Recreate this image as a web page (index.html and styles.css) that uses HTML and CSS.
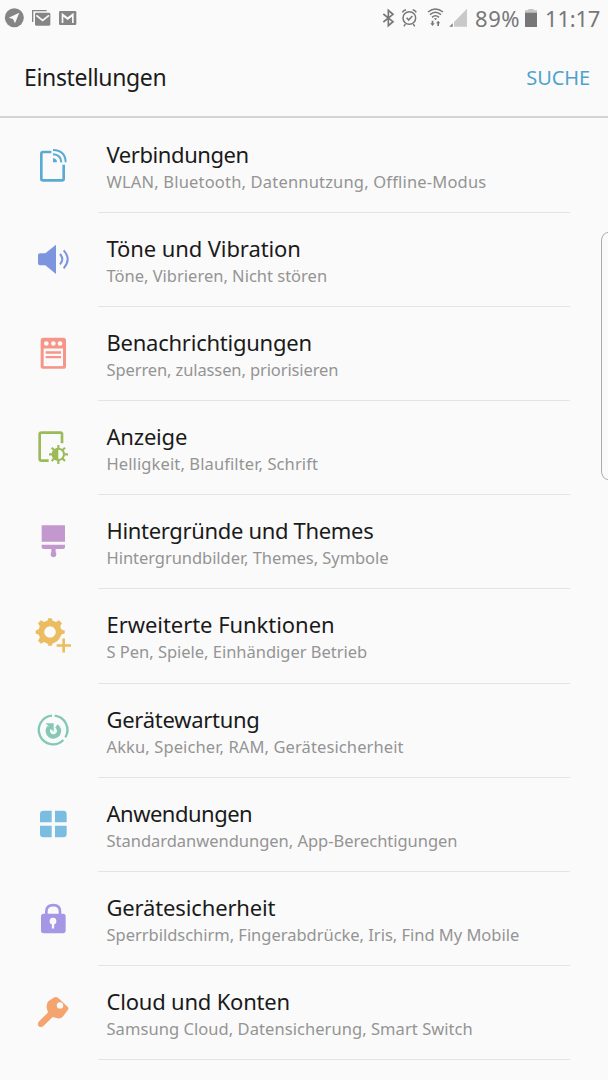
FILE: index.html
```html
<!DOCTYPE html>
<html lang="de">
<head>
<meta charset="utf-8">
<title>Einstellungen</title>
<link rel="stylesheet" href="styles.css">
</head>
<body>
<div class="screen">
<div class="statusbar">
  <svg class="status-left" viewBox="0 0 240 108">
    <circle cx="43" cy="53" r="28.5" fill="#858585"/><path d="M58 38L26 53L39 57L45 70Z" fill="#fafafa"/>
    <path d="M98 66V32H140" fill="none" stroke="#858585" stroke-width="4"/>
    <rect x="105" y="38" width="46" height="39" rx="4" fill="#858585"/><path d="M109 46L128 61L147 46" fill="none" stroke="#fafafa" stroke-width="5"/>
    <rect x="177" y="33" width="52" height="42" rx="4" fill="#858585"/><path d="M185 38L203 52L221 38V69H185Z" fill="#fafafa"/><path d="M190 69V50L203 60L216 50V69Z" fill="#858585"/>
  </svg>
  <svg class="status-signals" viewBox="30 0 270 108">
    <path d="M40 42L69 65L55 77V31L69 43L40 66" fill="none" stroke="#777" stroke-width="5"/>
    <g fill="none" stroke="#777" stroke-width="4.500"><circle cx="118" cy="54" r="19"/><path d="M110 53L116 60L127 48M97 37Q101 30 108 29M128 29Q135 30 139 37M106 72L102 79M130 72L134 79"/></g>
    <g fill="none" stroke="#777" stroke-width="4.500"><path d="M174 36Q196 18 219 36M180 44Q196 30 213 44M186 52Q196 43 207 52"/></g>
    <path d="M191 55H202L196.500 61ZM185 62H190V70H194L187.500 78L181 70H185ZM202 78H207V70H211L204.500 62L198 70H202Z" fill="#777"/>
    <path d="M291 26V80H252V66Z" fill="#c9c9c9"/><path d="M248 70V80H238Z" fill="#777"/>
  </svg>
  <span class="percent">89%</span>
  <svg class="battery" viewBox="0 0 36 54"><path d="M10 0H26V4H36V11H0V4H10Z" fill="#c4c4c4"/><path d="M0 11H36V54H0Z" fill="#777"/></svg>
  <span class="clock">11:17</span>
</div>
<header class="appbar"><h1 class="heading">Einstellungen</h1><span class="search">SUCHE</span></header>
<main class="list">
  <section class="row">
    <svg class="icon" viewBox="39 45 120 120"><path d="M94 66H69Q64 66 64 71V147Q64 151 69 151H126Q131 151 131 147V104" fill="none" stroke="#5aabd3" stroke-width="8"/><path d="M99 85Q111 86 111 97H99Z" fill="#5aabd3"/><path d="M99 73Q123 74 124 97M99 60Q136 61 137 97" fill="none" stroke="#5aabd3" stroke-width="6"/></svg>
    <div class="text"><h2 class="title t1">Verbindungen</h2><p class="sub s1">WLAN, Bluetooth, Datennutzung, Offline-Modus</p></div>
  </section>
  <section class="row">
    <svg class="icon" viewBox="39 327 120 120"><path d="M60 370H76L108 344V432L76 406H60Q54 406 54 400V376Q54 370 60 370Z" fill="#7c95de"/><path d="M120 372Q134 388 120 403M131 361Q155 388 131 415" fill="none" stroke="#7c95de" stroke-width="6"/></svg>
    <div class="text"><h2 class="title t2">Töne und Vibration</h2><p class="sub">Töne, Vibrieren, Nicht stören</p></div>
  </section>
  <section class="row">
    <svg class="icon" viewBox="39 39.600 120 120"><rect x="62" y="54" width="76" height="93" rx="8" fill="#f69588"/><path d="M71 86H129V139H71Z" fill="#fafafa"/><g fill="#fafafa"><circle cx="79" cy="71" r="7"/><circle cx="100" cy="71" r="7"/><circle cx="120" cy="71" r="7"/></g><path d="M77 98H123M77 112H123" stroke="#f69588" stroke-width="7"/></svg>
    <div class="text"><h2 class="title t3">Benachrichtigungen</h2><p class="sub s3">Sperren, zulassen, priorisieren</p></div>
  </section>
  <section class="row">
    <svg class="icon" viewBox="39 321 120 120"><path d="M126 370V342Q126 338 121 338H64Q59 338 59 343V417Q59 422 64 422H86" fill="none" stroke="#9bbb59" stroke-width="8"/><circle cx="115" cy="403" r="17" fill="none" stroke="#9bbb59" stroke-width="6"/><path d="M115 385V421A18 18 0 0 1 115 385Z" fill="#9bbb59"/><path d="M115 375V385M115 421V432M87 403H97M133 403H144M95 383L103 391M127 415L135 423M95 423L103 415M127 391L135 383" stroke="#9bbb59" stroke-width="6.500"/></svg>
    <div class="text"><h2 class="title t4">Anzeige</h2><p class="sub s4">Helligkeit, Blaufilter, Schrift</p></div>
  </section>
  <section class="row">
    <svg class="icon" viewBox="39 34 120 120"><path d="M65 47H135V96H65ZM65 105H135V112Q135 118 129 118H107V127Q109 130 109 134A8.500 8.500 0 0 1 92 134Q92 130 94 127V118H71Q65 118 65 112Z" fill="#c298ce"/></svg>
    <div class="text"><h2 class="title t5">Hintergründe und Themes</h2><p class="sub s5">Hintergrundbilder, Themes, Symbole</p></div>
  </section>
  <section class="row">
    <svg class="icon" viewBox="39 316.500 120 120"><circle cx="90" cy="367.500" r="26" fill="none" stroke="#ebbc60" stroke-width="17"/><path d="M80 339L85 326H95L100 339ZM80 396L85 409H95L100 396ZM61 358L47 363V372L61 377ZM118 358L134 363V372L118 377ZM63 356L54 341L63 332L78 341ZM102 341L117 332L126 341L117 356ZM63 379L54 394L63 403L78 394Z" fill="#ebbc60"/><path d="M131 382V434M104 408H158" stroke="#fafafa" stroke-width="18"/><path d="M131 387V429M110 408H153" stroke="#ebbc60" stroke-width="8"/></svg>
    <div class="text"><h2 class="title t6">Erweiterte Funktionen</h2><p class="sub s6">S Pen, Spiele, Einhändiger Betrieb</p></div>
  </section>
  <section class="row">
    <svg class="icon" viewBox="39 29 120 120"><path d="M96 46A43 43 0 1 0 130 119M136 111A43 43 0 0 0 104 46" fill="none" stroke="#84c8b6" stroke-width="7"/><path d="M87 81A17 17 0 1 0 109 77" fill="none" stroke="#84c8b6" stroke-width="13"/><path d="M77 69H101V94L92 85L84 91L79 86L86 78Z" fill="#84c8b6"/></svg>
    <div class="text"><h2 class="title t7">Gerätewartung</h2><p class="sub s7">Akku, Speicher, RAM, Gerätesicherheit</p></div>
  </section>
  <section class="row">
    <svg class="icon" viewBox="39 311 120 120"><path d="M70 331H95V366H60V341Q60 331 70 331ZM105 331H130Q140 331 140 341V366H105ZM60 376H95V411H70Q60 411 60 401ZM105 376H140V401Q140 411 130 411H105Z" fill="#7bbde0"/></svg>
    <div class="text"><h2 class="title t8">Anwendungen</h2><p class="sub s8">Standardanwendungen, App-Berechtigungen</p></div>
  </section>
  <section class="row">
    <svg class="icon" viewBox="39 23.400 120 120"><path d="M79 75V64Q79 45 100 45Q120 45 120 64V75" fill="none" stroke="#a597e6" stroke-width="8"/><rect x="63" y="71" width="74" height="58" rx="8" fill="#a597e6"/><circle cx="99" cy="93" r="10" fill="#fafafa"/><path d="M99 94V115" stroke="#fafafa" stroke-width="7"/></svg>
    <div class="text"><h2 class="title t9">Gerätesicherheit</h2><p class="sub s9">Sperrbildschirm, Fingerabdrücke, Iris, Find My Mobile</p></div>
  </section>
  <section class="row">
    <svg class="icon" viewBox="39 305.700 120 120"><path d="M86 333L102 322Q108 319 114 323L143 350Q147 354 144 359L130 378Q124 387 115 385L98 381L71 407Q65 413 58 410Q50 404 56 395L84 367L80 353Q79 338 86 333Z" fill="#f5a46f"/><circle cx="120" cy="346" r="9.500" fill="#fafafa"/></svg>
    <div class="text"><h2 class="title t10">Cloud und Konten</h2><p class="sub s10">Samsung Cloud, Datensicherung, Smart Switch</p></div>
  </section>
</main>
<div class="edge-handle"></div>
</div>
</body>
</html>
```
FILE: styles.css
```css
* { box-sizing: border-box; margin: 0; padding: 0; }
body { background: #fafafa; font-family: "Noto Sans", sans-serif; }
.screen { position: relative; width: 608px; height: 1080px; overflow: hidden; background: #fafafa; }
.statusbar { display: flex; align-items: flex-start; height: 36px; color: #777; font-size: 22px; line-height: 36px; white-space: nowrap; }
.status-left { width: 80px; height: 36px; margin-right: 300px; flex: none; }
.status-signals { width: 90px; height: 36px; flex: none; }
.percent { width: 55px; padding-left: 5px; flex: none; letter-spacing: 0.6px; }
.battery { width: 12px; height: 18px; margin-top: 9px; flex: none; }
.clock { padding-left: 8px; letter-spacing: -0.2px; }
.appbar { display: flex; justify-content: space-between; align-items: center; height: 82px; padding: 2px 18px 0 24px; border-bottom: 2px solid #d4d4d4; }
.heading { font-size: 23px; font-weight: 400; color: #1c1c1c; letter-spacing: -0.35px; }
.search { font-size: 20px; color: #4ea3cc; letter-spacing: -0.1px; }
.row { display: flex; align-items: flex-start; height: 94.1px; padding-left: 33px; }
.icon { width: 40px; height: 40px; margin-top: 27px; flex: none; }
.text { width: 472px; height: 95.1px; margin-left: 25px; padding: 21px 0 0 8.5px; border-bottom: 1px solid #e4e4e4; white-space: nowrap; flex: none; }
.title { font-size: 22px; font-weight: 400; line-height: 30px; color: #1a1a1a; }
.sub { padding-top: 1px; font-size: 16.5px; line-height: 24px; color: #949494; }
.t1 { letter-spacing: -0.42px; }
.t2 { letter-spacing: -0.1px; }
.t3 { letter-spacing: -0.24px; }
.t4 { letter-spacing: -0.2px; }
.t5 { letter-spacing: -0.33px; }
.t6 { letter-spacing: -0.05px; }
.t7 { letter-spacing: -0.28px; }
.t8 { letter-spacing: -0.5px; }
.t9 { letter-spacing: -0.15px; }
.t10 { letter-spacing: -0.2px; }
.s1 { letter-spacing: 0.18px; }
.s3 { letter-spacing: -0.11px; }
.s4 { letter-spacing: 0.11px; }
.s5 { letter-spacing: -0.05px; }
.s6 { letter-spacing: -0.02px; }
.s7 { letter-spacing: 0.11px; }
.s8 { letter-spacing: -0.02px; }
.s9 { letter-spacing: -0.02px; }
.s10 { letter-spacing: 0.06px; }
.edge-handle { position: absolute; left: 601px; top: 232px; width: 20px; height: 248px; border: 1px solid #adadad; border-radius: 7px / 9px; }
```
